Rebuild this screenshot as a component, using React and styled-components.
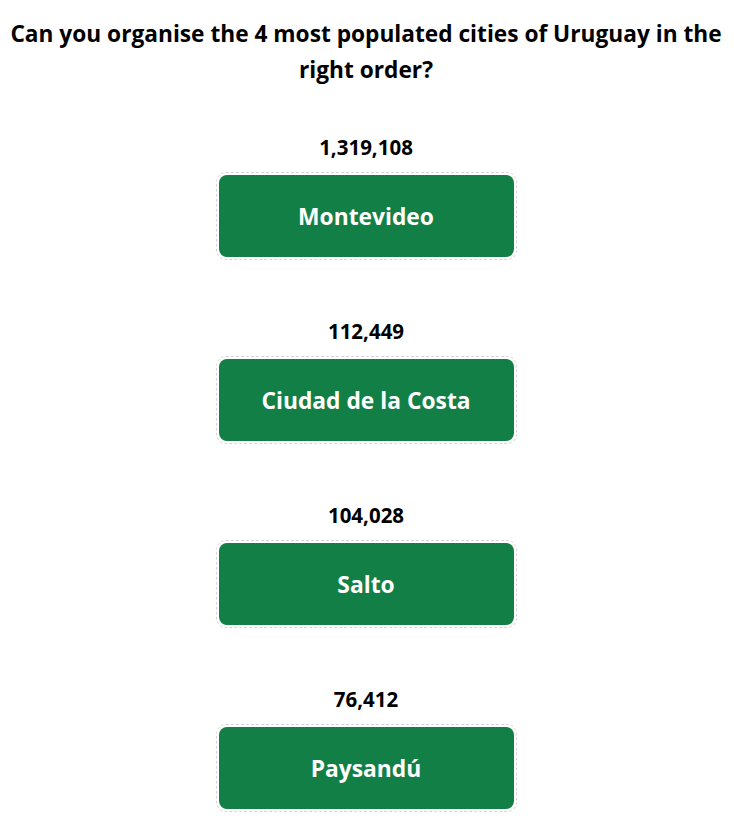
import React from "react";
import styled, { createGlobalStyle } from "styled-components";

const Global = createGlobalStyle`
  html, body { margin: 0; padding: 0; background: #fff; }
  body { font-family: "Open Sans", "Noto Sans", sans-serif; color: #000; }
`;

const Page = styled.main`
  display: flex;
  flex-direction: column;
  align-items: center;
  padding: 16px 5px 0 3px;
`;

const Title = styled.h1`
  margin: 0 0 48px;
  font-size: 22.7px;
  line-height: 36px;
  font-weight: 700;
  text-align: center;
  white-space: nowrap;
`;

const List = styled.ol`
  list-style: none;
  margin: 0;
  padding: 0;
  display: flex;
  flex-direction: column;
  align-items: center;
  gap: 60px;
`;

const Item = styled.li`
  display: flex;
  flex-direction: column;
  align-items: center;
  gap: 12px;
`;

const Population = styled.div`
  font-size: 20.5px;
  line-height: 24px;
  font-weight: 700;
  margin-top: -1px;
  margin-bottom: 1px;
`;

const Slot = styled.div`
  border: 1px dashed #d6d6d6;
  border-radius: 10px;
  padding: 2px;
`;

const City = styled.div`
  width: 295px;
  height: 82px;
  border-radius: 8px;
  background: #128046;
  color: #fff;
  display: flex;
  align-items: center;
  justify-content: center;
  font-size: 22.8px;
  font-weight: 700;
`;

const cities = [
  { pop: "1,319,108", name: "Montevideo" },
  { pop: "112,449", name: "Ciudad de la Costa" },
  { pop: "104,028", name: "Salto" },
  { pop: "76,412", name: "Paysandú" },
];

export default function App() {
  return (
    <>
      <Global />
      <Page>
        <Title>
          Can you organise the 4 most populated cities of Uruguay in the
          <br />
          right order?
        </Title>
        <List>
          {cities.map((c) => (
            <Item key={c.name}>
              <Population>{c.pop}</Population>
              <Slot>
                <City>{c.name}</City>
              </Slot>
            </Item>
          ))}
        </List>
      </Page>
    </>
  );
}
